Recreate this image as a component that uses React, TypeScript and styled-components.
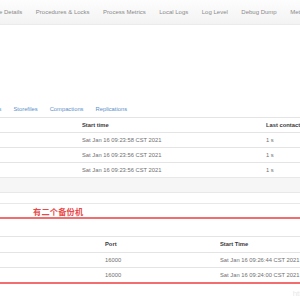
import React from "react";
import styled, { createGlobalStyle } from "styled-components";

const GlobalStyle = createGlobalStyle`
  html, body {
    margin: 0;
    padding: 0;
    background: #fff;
  }
  body {
    font-family: "Liberation Sans", Arial, sans-serif;
  }
`;

const Page = styled.div`
  position: relative;
  width: 300px;
  height: 300px;
  overflow: hidden;
  background: #fff;
`;

const NavBar = styled.nav`
  box-sizing: border-box;
  height: 25px;
  display: flex;
  align-items: center;
  background: linear-gradient(#fdfdfd, #f3f3f3);
  border-bottom: 1px solid #ebebeb;
  overflow: hidden;
  white-space: nowrap;
`;

const NavList = styled.div`
  display: flex;
  gap: 13.5px;
  margin-left: -12px;
`;

const NavItem = styled.span`
  font-size: 6px;
  color: #8a8a8a;
`;

const HeaderSpace = styled.div`
  height: 76px;
`;

const Tabs = styled.div`
  height: 16px;
  display: flex;
  align-items: center;
  gap: 12px;
  margin-left: -23px;
  white-space: nowrap;
`;

const Tab = styled.span`
  font-size: 5.8px;
  color: #5b8fc9;
`;

const Table = styled.div<{ $cols: string }>`
  display: grid;
  grid-template-columns: ${(p) => p.$cols};
`;

const Cell = styled.div<{ $head?: boolean }>`
  box-sizing: border-box;
  height: 15px;
  line-height: 14px;
  border-top: 1px solid #e4e4e4;
  font-size: 5.8px;
  color: ${(p) => (p.$head ? "#3a3a3a" : "#707070")};
  font-weight: ${(p) => (p.$head ? 700 : 400)};
  white-space: nowrap;
  overflow: hidden;
`;

const Band = styled.div`
  box-sizing: border-box;
  height: 15px;
  background: #f6f6f6;
  border-top: 1px solid #e8e8e8;
`;

const Gap = styled.div<{ $h: number; $line?: boolean }>`
  box-sizing: border-box;
  height: ${(p) => p.$h}px;
  border-top: ${(p) => (p.$line ? "1px solid #e8e8e8" : "none")};
`;

const Note = styled.div`
  box-sizing: border-box;
  height: 16px;
  padding-left: 33px;
  border-top: 1px solid #e8e8e8;
  border-bottom: 2px solid #f26d6d;
  font-family: "Noto Sans CJK SC", sans-serif;
  font-size: 8.2px;
  font-weight: 700;
  line-height: 15px;
  color: #e84848;
  letter-spacing: 0.2px;
`;

const RedRule = styled.div`
  height: 2px;
  background: #f26d6d;
`;

const Watermark = styled.span`
  position: absolute;
  right: -6px;
  bottom: 2px;
  font-size: 8px;
  color: #e8e8e8;
`;

const navItems = [
  "Table Details",
  "Procedures & Locks",
  "Process Metrics",
  "Local Logs",
  "Log Level",
  "Debug Dump",
  "Metrics Dump",
];

const servers = [
  "Sat Jan 16 09:23:58 CST 2021",
  "Sat Jan 16 09:23:56 CST 2021",
  "Sat Jan 16 09:23:56 CST 2021",
];

const backups = [
  { port: "16000", start: "Sat Jan 16 09:26:44 CST 2021" },
  { port: "16000", start: "Sat Jan 16 09:24:00 CST 2021" },
];

export default function App() {
  return (
    <Page>
      <GlobalStyle />
      <NavBar>
        <NavList>
          {navItems.map((n) => (
            <NavItem key={n}>{n}</NavItem>
          ))}
        </NavList>
      </NavBar>
      <HeaderSpace />
      <Tabs>
        <Tab>Requests</Tab>
        <Tab>Storefiles</Tab>
        <Tab>Compactions</Tab>
        <Tab>Replications</Tab>
      </Tabs>
      <Table $cols="82px 184px 1fr">
        <Cell $head />
        <Cell $head>Start time</Cell>
        <Cell $head>Last contact</Cell>
        {servers.map((s, i) => (
          <React.Fragment key={i}>
            <Cell />
            <Cell>{s}</Cell>
            <Cell>1 s</Cell>
          </React.Fragment>
        ))}
      </Table>
      <Band />
      <Gap $h={11} $line />
      <Note>有二个备份机</Note>
      <Gap $h={17} />
      <Table $cols="105px 115px 1fr">
        <Cell $head style={{ height: 16 }} />
        <Cell $head style={{ height: 16 }}>Port</Cell>
        <Cell $head style={{ height: 16 }}>Start Time</Cell>
        {backups.map((b, i) => (
          <React.Fragment key={i}>
            <Cell />
            <Cell>{b.port}</Cell>
            <Cell>{b.start}</Cell>
          </React.Fragment>
        ))}
      </Table>
      <RedRule />
      <Watermark>http</Watermark>
    </Page>
  );
}
